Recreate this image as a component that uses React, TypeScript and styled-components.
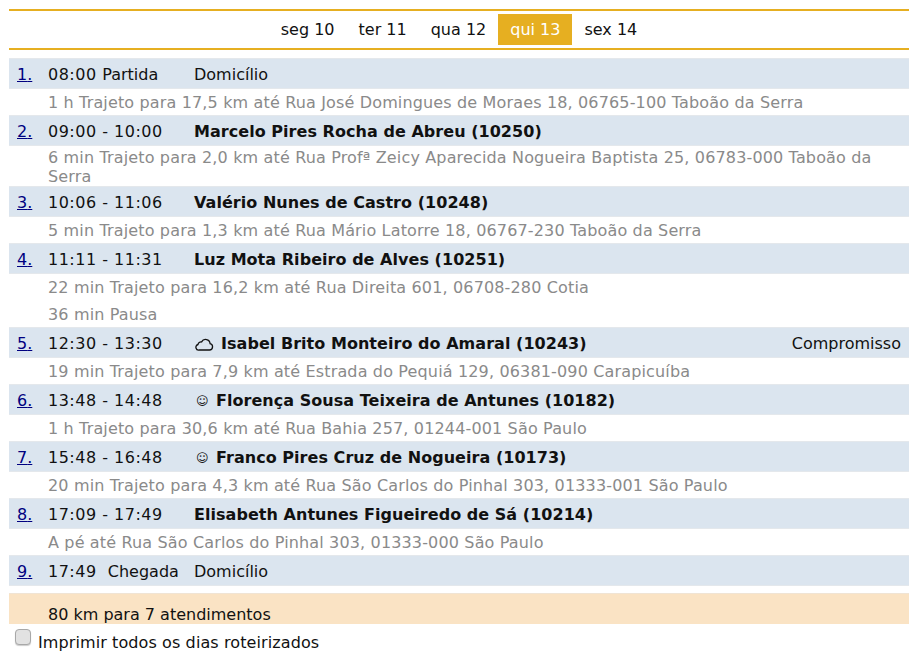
import styled, { createGlobalStyle } from 'styled-components';

const GlobalStyle = createGlobalStyle`
  html, body {
    margin: 0;
    padding: 0;
    background: #ffffff;
  }
  body {
    font-family: "DejaVu Sans", Verdana, sans-serif;
    font-size: 16px;
    color: #111111;
  }
`;

const Page = styled.div`
  width: 900px;
  margin-left: 9px;
  padding-top: 9px;
`;

const DayBar = styled.nav`
  display: flex;
  justify-content: center;
  height: 41px;
  padding-top: 3px;
  box-sizing: border-box;
  border-top: 2px solid #e6af21;
  border-bottom: 2px solid #e6af21;
  margin-bottom: 8px;
`;

const Day = styled.a<{ $active?: boolean }>`
  display: flex;
  align-items: center;
  height: 31px;
  padding: 0 12px;
  background: ${(p) => (p.$active ? '#e6af21' : 'transparent')};
  color: ${(p) => (p.$active ? '#ffffff' : '#111111')};
`;

const Stop = styled.div`
  display: flex;
  align-items: center;
  height: 31px;
  box-sizing: border-box;
  padding: 2px 8px 0 0;
  background: #dbe5ef;
  border-top: 1px solid #e4e8ec;
  border-bottom: 1px solid #e4e8ec;
`;

const StopNumber = styled.a`
  width: 31px;
  margin-left: 8px;
  color: #000080;
  text-decoration: underline;
`;

const Time = styled.span`
  width: 146px;
  flex-shrink: 0;
  white-space: pre;
  letter-spacing: 0.5px;
`;

const TimeLabel = styled.span`
  letter-spacing: 0;
`;

const Name = styled.strong`
  display: flex;
  align-items: center;
  flex: 1;
  font-weight: 700;
  letter-spacing: 0.04px;
`;

const Plain = styled.span`
  flex: 1;
`;

const Kind = styled.span`
  margin-left: auto;
`;

const Smile = styled.span`
  width: 22px;
  padding-left: 2px;
  box-sizing: border-box;
  font-weight: 400;
  font-size: 12px;
`;

const CloudIcon = styled.svg`
  width: 19px;
  height: 13px;
  margin: 2px 7px 0 1px;
  flex-shrink: 0;
`;

const Leg = styled.div`
  display: flex;
  align-items: center;
  min-height: 26px;
  padding: 1.5px 34px 0.5px 39px;
  box-sizing: border-box;
  line-height: 19px;
  letter-spacing: 0.15px;
  color: #8a8a8a;

  & + & {
    margin-top: 1px;
  }
`;

const Summary = styled.div`
  height: 31px;
  margin-top: 7px;
  padding: 11px 0 0 39px;
  box-sizing: border-box;
  line-height: 19px;
  background: #fae3c4;
  border-top: 1px solid #f0e4d4;
`;

const PrintRow = styled.label`
  display: flex;
  align-items: flex-start;
  height: 34px;
  padding: 5px 0 0 6px;
  box-sizing: border-box;
  letter-spacing: 0.1px;
  line-height: 19px;
`;

const PrintText = styled.span`
  margin-top: 4px;
`;

const Check = styled.input`
  appearance: none;
  width: 16px;
  height: 16px;
  margin: 0 7px 0 0;
  box-sizing: border-box;
  background: #e2e2e2;
  border: 1px solid #a8a8a8;
  border-radius: 4px;
  box-shadow: 0 1px 1px rgba(0, 0, 0, 0.2);
`;

type StopItem = {
  n: number;
  time: string;
  label?: string;
  name?: string;
  place?: string;
  icon?: 'cloud' | 'smile';
  kind?: string;
  legs: string[];
};

const stops: StopItem[] = [
  { n: 1, time: '08:00 ', label: 'Partida', place: 'Domicílio', legs: ['1 h Trajeto para 17,5 km até Rua José Domingues de Moraes 18, 06765-100 Taboão da Serra'] },
  { n: 2, time: '09:00 - 10:00', name: 'Marcelo Pires Rocha de Abreu (10250)', legs: ['6 min Trajeto para 2,0 km até Rua Profª Zeicy Aparecida Nogueira Baptista 25, 06783-000 Taboão da Serra'] },
  { n: 3, time: '10:06 - 11:06', name: 'Valério Nunes de Castro (10248)', legs: ['5 min Trajeto para 1,3 km até Rua Mário Latorre 18, 06767-230 Taboão da Serra'] },
  { n: 4, time: '11:11 - 11:31', name: 'Luz Mota Ribeiro de Alves (10251)', legs: ['22 min Trajeto para 16,2 km até Rua Direita 601, 06708-280 Cotia', '36 min Pausa'] },
  { n: 5, time: '12:30 - 13:30', name: 'Isabel Brito Monteiro do Amaral (10243)', icon: 'cloud', kind: 'Compromisso', legs: ['19 min Trajeto para 7,9 km até Estrada do Pequiá 129, 06381-090 Carapicuíba'] },
  { n: 6, time: '13:48 - 14:48', name: 'Florença Sousa Teixeira de Antunes (10182)', icon: 'smile', legs: ['1 h Trajeto para 30,6 km até Rua Bahia 257, 01244-001 São Paulo'] },
  { n: 7, time: '15:48 - 16:48', name: 'Franco Pires Cruz de Nogueira (10173)', icon: 'smile', legs: ['20 min Trajeto para 4,3 km até Rua São Carlos do Pinhal 303, 01333-001 São Paulo'] },
  { n: 8, time: '17:09 - 17:49', name: 'Elisabeth Antunes Figueiredo de Sá (10214)', legs: ['A pé até Rua São Carlos do Pinhal 303, 01333-000 São Paulo'] },
  { n: 9, time: '17:49  ', label: 'Chegada', place: 'Domicílio', legs: [] },
];

const days = ['seg 10', 'ter 11', 'qua 12', 'qui 13', 'sex 14'];

const Cloud = () => (
  <CloudIcon viewBox="0 0 19 13" fill="none" stroke="#111111" strokeWidth="1.3">
    <path d="M4.5 12h10a3.2 3.2 0 0 0 .6-6.3 4.5 4.5 0 0 0-8.5-1.8 3 3 0 0 0-3.6 2.6A2.8 2.8 0 0 0 4.5 12z" />
  </CloudIcon>
);

const App = () => {
  return (
    <Page>
      <GlobalStyle />
      <DayBar>
        {days.map((d) => (
          <Day key={d} $active={d === 'qui 13'}>{d}</Day>
        ))}
      </DayBar>
      {stops.map((s) => (
        <div key={s.n}>
          <Stop>
            <StopNumber href="#">{s.n}.</StopNumber>
            <Time>
              {s.time}
              {s.label && <TimeLabel>{s.label}</TimeLabel>}
            </Time>
            {s.name ? (
              <Name>
                {s.icon === 'cloud' && <Cloud />}
                {s.icon === 'smile' && <Smile>☺</Smile>}
                {s.name}
              </Name>
            ) : (
              <Plain>{s.place}</Plain>
            )}
            {s.kind && <Kind>{s.kind}</Kind>}
          </Stop>
          {s.legs.map((l) => (
            <Leg key={l}>{l}</Leg>
          ))}
        </div>
      ))}
      <Summary>80 km para 7 atendimentos</Summary>
      <PrintRow>
        <Check type="checkbox" />
        <PrintText>Imprimir todos os dias roteirizados</PrintText>
      </PrintRow>
    </Page>
  );
};

export default App;
